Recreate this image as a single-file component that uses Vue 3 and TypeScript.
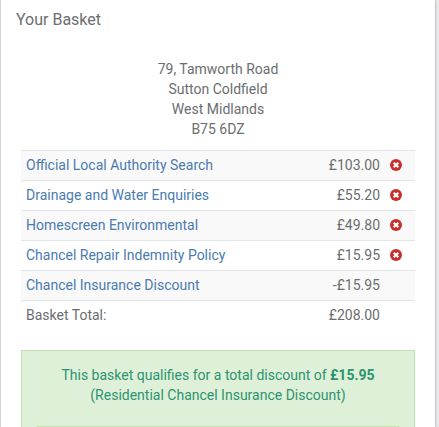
<script setup lang="ts">
import { computed, ref } from 'vue'

interface BasketItem {
  id: number
  name: string
  pence: number
  removable: boolean
}

const address: string[] = ['79, Tamworth Road', 'Sutton Coldfield', 'West Midlands', 'B75 6DZ']

const items = ref<BasketItem[]>([
  { id: 1, name: 'Official Local Authority Search', pence: 10300, removable: true },
  { id: 2, name: 'Drainage and Water Enquiries', pence: 5520, removable: true },
  { id: 3, name: 'Homescreen Environmental', pence: 4980, removable: true },
  { id: 4, name: 'Chancel Repair Indemnity Policy', pence: 1595, removable: true },
  { id: 5, name: 'Chancel Insurance Discount', pence: -1595, removable: false },
])

const total = computed(() => items.value.reduce((sum, item) => sum + item.pence, 0))

function money(pence: number): string {
  return `${pence < 0 ? '-' : ''}£${(Math.abs(pence) / 100).toFixed(2)}`
}

function removeItem(id: number): void {
  items.value = items.value.filter((item) => item.id !== id)
}
</script>

<template>
  <main class="panel">
    <h1 class="title">Your Basket</h1>
    <div class="content">
      <address class="address">
        <div v-for="line in address" :key="line">{{ line }}</div>
      </address>

      <table class="basket">
        <tbody>
          <tr v-for="item in items" :key="item.id">
            <td><a href="#">{{ item.name }}</a></td>
            <td class="price">{{ money(item.pence) }}</td>
            <td class="action">
              <button
                v-if="item.removable"
                type="button"
                class="remove"
                :aria-label="`Remove ${item.name}`"
                @click="removeItem(item.id)"
              >
                <svg viewBox="0 0 12 12" width="12" height="12" aria-hidden="true">
                  <circle cx="6" cy="6" r="6" fill="#c9302c" />
                  <path d="M3.7 3.7l4.6 4.6M8.3 3.7l-4.6 4.6" stroke="#fff" stroke-width="2.1" />
                </svg>
              </button>
            </td>
          </tr>
          <tr>
            <td>Basket Total:</td>
            <td class="price">{{ money(total) }}</td>
            <td class="action"></td>
          </tr>
        </tbody>
      </table>

      <section class="notice">
        <p>
          This basket qualifies for a total discount of <strong>£15.95</strong><br />
          (Residential Chancel Insurance Discount)
        </p>
        <hr />
      </section>
    </div>
  </main>
</template>

<style>
body {
  margin: 0;
  background: #ebebed;
}
</style>

<style scoped>
.panel {
  box-sizing: border-box;
  min-height: 100vh;
  margin-right: 4px;
  border-left: 1px solid #d5d5d5;
  background: #fff;
  box-shadow: 1px 0 2px rgba(0, 0, 0, 0.2);
  color: #6b6e70;
  font: 14px/20px Roboto, sans-serif;
}

.title {
  margin: 0;
  padding: 10px 15px;
  font-size: 16px;
  font-weight: 400;
  line-height: 20px;
}

.content {
  padding: 19px 20px 0;
}

.address {
  margin-bottom: 11px;
  font-style: normal;
  text-align: center;
}

.basket {
  width: 100%;
  margin-bottom: 20px;
  border-spacing: 0;
}

.basket td {
  height: 20px;
  padding: 4px 5px 5px;
  border-top: 1px solid #e3e6e8;
}

.basket tr:nth-child(odd) td {
  background: #f9f9f9;
}

.basket a {
  color: #4a7bb0;
  text-decoration: none;
}

.basket .price {
  text-align: right;
}

.basket .action {
  width: 20px;
}

.remove {
  display: flex;
  align-items: center;
  height: 20px;
  padding: 0;
  border: 0;
  background: none;
  cursor: pointer;
}

.notice {
  padding: 14px 15px 0;
  border: 1px solid #c0deb2;
  border-bottom: 0;
  background: #dff0d8;
  color: #2b9470;
  text-align: center;
}

.notice p {
  margin: 0;
}

.notice strong {
  font-weight: 700;
}

.notice hr {
  margin: 21px 0 0;
  border: 0;
  border-top: 1px solid #c3e0ad;
}
</style>
